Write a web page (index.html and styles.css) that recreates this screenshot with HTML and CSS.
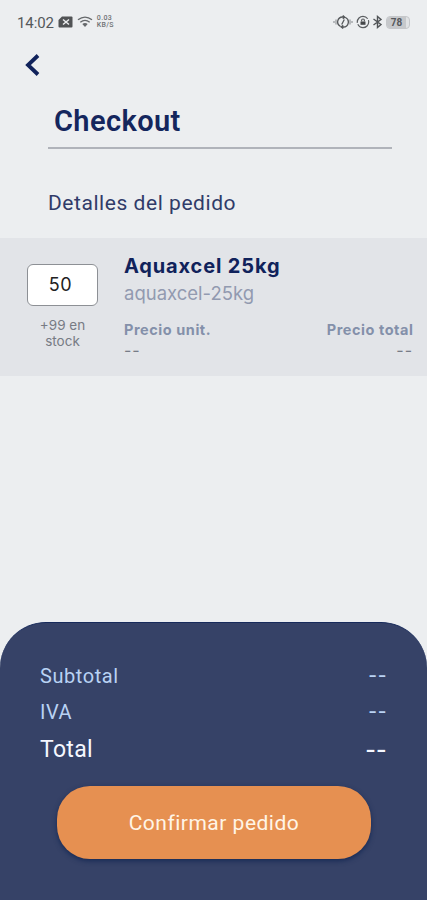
FILE: index.html
```html
<!DOCTYPE html>
<html lang="es">
<head>
<meta charset="utf-8">
<title>Checkout</title>
<link rel="stylesheet" href="styles.css">
</head>
<body>
<main class="screen">
  <div class="status">
    <div class="status-left">
      <span class="clock">14:02</span>
      <svg class="sim" width="15" height="12" viewBox="0 0 15 12"><path d="M4 .5h9.500q1 0 1 1v9q0 1-1 1h-12q-1 0-1-1V4z" fill="#515355"/><path d="M5 3.500l6 5M11 3.500l-6 5" stroke="#eceef0" stroke-width="1.500"/></svg>
      <svg class="wifi" width="16" height="12" viewBox="0 0 16 12" fill="none" stroke="#65686b" stroke-width="1.400"><path d="M1 3.800Q8-1.600 15 3.800M3.300 6.200q4.700-3.600 9.400 0"/><path d="M5.300 8q2.700-1.900 5.400 0L8 11z" fill="#65686b" stroke="none"/></svg>
      <span class="speed"><span>0.03</span><span>KB/S</span></span>
    </div>
    <div class="status-right">
      <svg width="20" height="14" viewBox="0 0 20 14" fill="none" stroke="#55585b" stroke-width="1.300"><path d="M7.500 11.500A5 5 0 0 1 9.500 2l2 .2M12.500 2.500a5 5 0 0 1-2 9.500l-2-.2M9.800.500l2 1.700-2 1.600M10.200 10.200l-2 1.700 2 1.600M11.300 4.500L8.700 9.500"/><path d="M3 4.500v5M17 4.500v5M1 6v2M19 6v2" stroke="#9a9da0"/></svg>
      <svg width="14" height="14" viewBox="0 0 14 14" fill="none" stroke="#5a5d60" stroke-width="1.200"><circle cx="7" cy="7" r="5.700" stroke-dasharray="15 1.500"/><path d="M4.500 6.500h5v3.300h-5z" fill="#444649" stroke="none"/><path d="M5.600 6.500V5.400a1.400 1.400 0 0 1 2.800 0v1.100"/></svg>
      <svg class="bt" width="11" height="14" viewBox="0 0 11 14" fill="none" stroke="#505356" stroke-width="1.400"><path d="M1.500 4l7.500 5.500-3.500 3V1.500l3.500 3L1.500 10"/></svg>
      <span class="battery"><span class="level">78</span></span>
    </div>
  </div>

  <a class="back" href="#" aria-label="Volver"><svg width="16" height="24" viewBox="0 0 16 24" fill="none" stroke="#10225b" stroke-width="3.800"><path d="M14 2.500L4 12l10 9.500"/></svg></a>
  <h1 class="title"><span>Checkout</span></h1>
  <h2 class="subtitle">Detalles del pedido</h2>

  <section class="item">
    <div class="quantity">
      <input class="amount" value="50" aria-label="Cantidad">
      <p class="stock">+99 en<br>stock</p>
    </div>
    <div class="details">
      <h3 class="name">Aquaxcel 25kg</h3>
      <p class="sku">aquaxcel-25kg</p>
      <div class="prices">
        <div><p class="label">Precio unit.</p><p class="dash">--</p></div>
        <div class="right"><p class="label">Precio total</p><p class="dash">--</p></div>
      </div>
    </div>
  </section>

  <section class="summary">
    <div class="line"><span>Subtotal</span><span class="value">--</span></div>
    <div class="line"><span>IVA</span><span class="value">--</span></div>
    <div class="line total"><span>Total</span><span class="value">--</span></div>
    <button class="confirm">Confirmar pedido</button>
  </section>
</main>
</body>
</html>
```
FILE: styles.css
```css
* { box-sizing: border-box; }
body, h1, h2, h3, p { margin: 0; }
body { font-family: Roboto, sans-serif; background: #eceef0; }
.screen {
  width: 427px;
  height: 900px;
  display: flex;
  flex-direction: column;
  overflow: hidden;
  background: #eceef0;
}
.status {
  height: 44px;
  display: flex;
  justify-content: space-between;
  align-items: center;
  padding: 0 17px;
  flex: none;
}
.status-left, .status-right { display: flex; align-items: center; }
.clock { font-size: 15px; line-height: 20px; color: #55585b; margin-top: 2px; letter-spacing: -.1px; }
.sim { margin-left: 4px; }
.wifi { margin-left: 4px; }
.speed {
  display: flex;
  flex-direction: column;
  margin-left: 4px;
  font-size: 7px;
  line-height: 7px;
  font-weight: 500;
  color: #6f7275;
  letter-spacing: .3px;
}
.status-right { gap: 3px; }
.bt { margin-left: -1px; }
.battery {
  width: 24px;
  height: 13px;
  background: #e1e3e5;
  border: 1px solid #c5c7ca;
  border-radius: 4px;
  display: flex;
}
.level {
  width: 19px;
  background: #c6c8cb;
  border-radius: 3px 0 0 3px;
  font-size: 10px;
  line-height: 12px;
  font-weight: 700;
  color: #55585b;
  text-align: center;
}
.back { height: 42px; padding: 9px 0 0 24px; flex: none; }
.back svg { display: block; }
.title {
  margin: 0 35px 0 48px;
  padding: 15px 0 0 6px;
  height: 63px;
  border-bottom: 2px solid #b0b3ba;
  font-size: 29px;
  line-height: 41px;
  font-weight: 600;
  color: #14265d;
  letter-spacing: .4px;
}
.subtitle {
  margin: 39px 0 0 48px;
  height: 50px;
  font-size: 21px;
  line-height: 30px;
  font-weight: 400;
  color: #303b69;
  letter-spacing: .55px;
}
.item {
  height: 138px;
  padding: 0 14px 0 27px;
  display: flex;
  background: #e2e4e8;
  flex: none;
}
.quantity { width: 71px; padding-top: 26px; text-align: center; }
.amount {
  display: block;
  width: 71px;
  height: 42px;
  padding: 0 4px 1px 0;
  border: 1px solid #8d9095;
  border-radius: 6px;
  background: #fff;
  font: 400 18px Inter, sans-serif;
  letter-spacing: .5px;
  text-align: center;
  color: #222;
}
.stock { margin-top: 11px; font-family: Inter, sans-serif; font-size: 13.500px; line-height: 16px; color: #777b84; }
.details { flex: 1; padding: 14px 0 0 26px; }
.name { font-family: Inter, sans-serif; font-size: 20px; line-height: 28px; font-weight: 700; color: #10225b; letter-spacing: .85px; }
.sku { font-family: Inter, sans-serif; font-size: 18.500px; line-height: 26px; color: #929ab0; }
.prices { display: flex; justify-content: space-between; margin-top: 14px; }
.label { font-family: Inter, sans-serif; font-size: 14.500px; line-height: 20px; font-weight: 700; color: #8490aa; letter-spacing: .55px; }
.right .label { margin-right: -.5px; }
.dash { font-family: Inter, sans-serif; font-size: 16px; line-height: 20px; color: #777c87; letter-spacing: 1px; }
.right { text-align: right; }
.summary {
  margin-top: auto;
  height: 278px;
  padding: 36px 40px 0;
  border-radius: 46px 46px 0 0;
  background: #364267;
  border-top: 1px solid #172a5b;
  flex: none;
}
.line { display: flex; justify-content: space-between; height: 35.500px; line-height: 34px; font-size: 20px; color: #b9d2f4; font-weight: 450; letter-spacing: .55px; }
.value { font-family: Inter, sans-serif; font-size: 19px; }
.total { height: 40px; line-height: 40px; font-size: 23px; color: #f5f7ff; letter-spacing: .3px; }
.total .value { font-size: 23px; }
.confirm {
  display: block;
  width: 314px;
  height: 73px;
  margin: 16px 0 0 17px;
  border: 0;
  border-radius: 33px;
  background: #e69051;
  box-shadow: 0 2px 5px #172a55;
  color: #fff5e7;
  font: 450 21px Roboto, sans-serif;
  letter-spacing: .5px;
}
```
